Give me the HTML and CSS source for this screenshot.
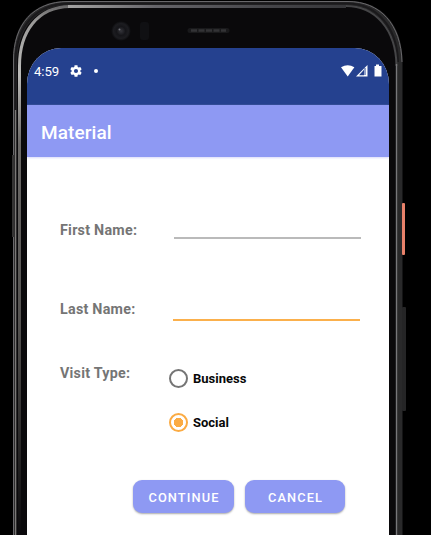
FILE: index.html
```html
<!DOCTYPE html>
<html lang="en">
<head>
<meta charset="utf-8">
<title>Material</title>
<link rel="stylesheet" href="styles.css">
</head>
<body>
<div class="device">
  <svg class="shell" width="431" height="535" viewBox="0 0 431 535" aria-hidden="true">
    <defs>
      <linearGradient id="rim" x1="0" y1="0" x2="0" y2="535" gradientUnits="userSpaceOnUse">
        <stop offset="0" stop-color="#555456"/><stop offset=".04" stop-color="#9a9998"/><stop offset=".14" stop-color="#bdbcba"/><stop offset=".27" stop-color="#6b6967"/><stop offset=".6" stop-color="#555351"/><stop offset="1" stop-color="#55534f" stop-opacity="0"/>
      </linearGradient>
      <linearGradient id="top" x1="45" y1="0" x2="360" y2="0" gradientUnits="userSpaceOnUse">
        <stop offset="0" stop-color="#b5b4b2"/><stop offset=".35" stop-color="#66656a"/><stop offset=".7" stop-color="#46464a"/><stop offset="1" stop-color="#343437"/>
      </linearGradient>
      <radialGradient id="lens"><stop offset="0" stop-color="#34343a"/><stop offset=".45" stop-color="#151519"/><stop offset=".75" stop-color="#1c1c20"/><stop offset="1" stop-color="#09090b"/></radialGradient>
    </defs>
    <path d="M13 535V60C13 24 32 1 68 1H348C382 1 402.500 25 402.500 62V535Z" fill="#29292a"/>
    <path d="M13.500 535V60C13.500 25 33 1.500 68 1.500H348C380 1.500 401 24 402 62" fill="none" stroke="#69686b"/>
    <path d="M15.500 535V62C15.500 28 35 3.500 70 3.500H347C375 3.500 397 25 398 62" fill="none" stroke="#1a191b" stroke-width="2"/>
    <path d="M17 535V64C17 29 36 5 70 5H346C375 5 397 28 397 64V535Z" fill="#0a090b"/>
    <path d="M19.500 535V66C19.500 32 37 7 70 6.500" fill="none" stroke="url(#rim)" stroke-width="3"/>
    <path d="M68 6.500H346" fill="none" stroke="url(#top)" stroke-width="3"/>
    <path d="M346 6C375 6 396 29 396.500 66" fill="none" stroke="#454547" stroke-width="2"/>
    <path d="M396.500 64V535" stroke="#77777a" stroke-width="1.400"/>
    <path d="M15.500 110V535" stroke="#7b7977" stroke-width="1.300"/>
    <rect x="12" y="155" width="2" height="82" fill="#343333"/>
    <rect x="402" y="203" width="3" height="52" rx="1" fill="#e8816a"/>
    <rect x="402" y="307" width="4" height="104" rx="1" fill="#252526"/>
    <circle cx="121" cy="31" r="10" fill="url(#lens)"/><circle cx="119.500" cy="29.500" r="1" fill="#73737a"/>
    <rect x="140" y="22" width="9" height="18" rx="3" fill="#101013"/>
    <path d="M190 30.500H227" stroke="#19191b" stroke-width="5" stroke-linecap="round"/>
    <path d="M191 30.500H226" stroke="#333336" stroke-width="2.500" stroke-dasharray="6 1.500"/>
  </svg>
  <main class="screen">
    <header class="status">
      <span class="time">4:59</span>
      <svg class="gear" viewBox="0 0 24 24"><path fill="#fff" fill-rule="evenodd" d="M19.400 13a8 8 0 0 0 0-2l2.300-1.800-2.300-4-2.700 1a8 8 0 0 0-1.800-1L14.500 2.300h-5L9.100 5.200a8 8 0 0 0-1.800 1l-2.700-1-2.300 4L4.600 11a8 8 0 0 0 0 2l-2.300 1.800 2.300 4 2.700-1a8 8 0 0 0 1.800 1l.4 2.900h5l.4-2.900a8 8 0 0 0 1.800-1l2.700 1 2.300-4zM12 15.500a3.500 3.500 0 1 1 0-7 3.500 3.500 0 0 1 0 7z"/></svg>
      <i class="dot"></i>
      <svg class="signals" width="42" height="14" viewBox="0 0 42 14"><path d="M0 3.300Q6.700-1 13.400 3.300L6.700 12.500Z" fill="#fff"/><path d="M26.500 1V12.500H15Z" fill="#fff"/><path d="M23 5.800V11.300H18Z" fill="#25418f"/><path d="M24 4V11" stroke="#25418f"/><path d="M35 .5h3V2h2.500v10.500h-7V2H35Z" fill="#fff"/></svg>
    </header>
    <h1 class="appbar">Material</h1>
    <form class="form">
      <label class="label" for="first">First Name:</label>
      <input class="field first" id="first">
      <label class="label last-label" for="last">Last Name:</label>
      <input class="field last" id="last">
      <span class="label visit-label">Visit Type:</span>
      <div class="options">
        <label class="option"><input class="radio" type="radio" name="visit">Business</label>
        <label class="option"><input class="radio" type="radio" name="visit" checked>Social</label>
      </div>
      <div class="actions">
        <button class="button continue" type="button">CONTINUE</button>
        <button class="button" type="button">CANCEL</button>
      </div>
    </form>
  </main>
</div>
</body>
</html>
```
FILE: styles.css
```css
* { box-sizing: border-box; }
body { margin: 0; background: #000; font-family: Roboto, sans-serif; }
.device { position: relative; width: 431px; height: 535px; padding: 48px 42px 0 27px; overflow: hidden; }
.shell { position: absolute; inset: 0; }
.screen { position: relative; height: 487px; overflow: hidden; background: #fff; border-radius: 34px 34px 0 0 / 36px 36px 0 0; }
.status { display: flex; align-items: center; height: 57px; padding: 0 6px 11px 7px; background: #25418f; color: #fff; }
.time { width: 35px; padding-top: 1px; font-size: 13.2px; line-height: 16px; letter-spacing: -.1px; }
.gear { width: 14px; height: 14px; }
.dot { width: 4px; height: 4px; margin-left: 11px; border-radius: 50%; background: #fff; }
.signals { margin-left: auto; }
.appbar { height: 52px; margin: 0; padding-left: 14px; background: #8e99f3; color: #fff; font-size: 19px; font-weight: 500; line-height: 55px; letter-spacing: .08px; box-shadow: 0 1px 2px #d9dafa; }
.form { display: grid; grid-template-columns: 109px 1fr; grid-template-rows: 82px 82px 159px 34px; padding: 0 28px 0 33px; }
.label { padding-top: 64px; color: #757575; font-size: 14.3px; font-weight: 700; line-height: 19px; letter-spacing: .25px; white-space: nowrap; }
.last-label { padding-top: 61px; }
.visit-label { padding-top: 43px; }
.field { align-self: end; width: 187px; height: 30px; padding: 0; border: 0; outline: 0; background: transparent; }
.first { margin-left: 5px; border-bottom: 2px solid #bababa; }
.last { margin-left: 4px; border-bottom: 2px solid #fbb04c; }
.options { padding-top: 35px; }
.option { display: flex; align-items: center; height: 44px; color: #080808; font-size: 13px; font-weight: 700; }
.radio { appearance: none; width: 19px; height: 19px; margin: 0 5px 0 0; border: 2px solid #757575; border-radius: 50%; background: #fff; }
.radio:checked { border-color: #fbab43; background: radial-gradient(circle, #fbab43 0 4.5px, #fff 5px); }
.actions { grid-column: 1 / -1; display: flex; gap: 11px; padding-left: 73px; }
.button { width: 100px; height: 33px; padding: 1px 0 0 1px; border: 0; border-radius: 9px; background: #8e99f3; color: #fff; font: 500 12.8px Roboto, sans-serif; letter-spacing: 1.1px; box-shadow: 0 1px 2px #aaa; }
.continue { width: 101px; }
```
